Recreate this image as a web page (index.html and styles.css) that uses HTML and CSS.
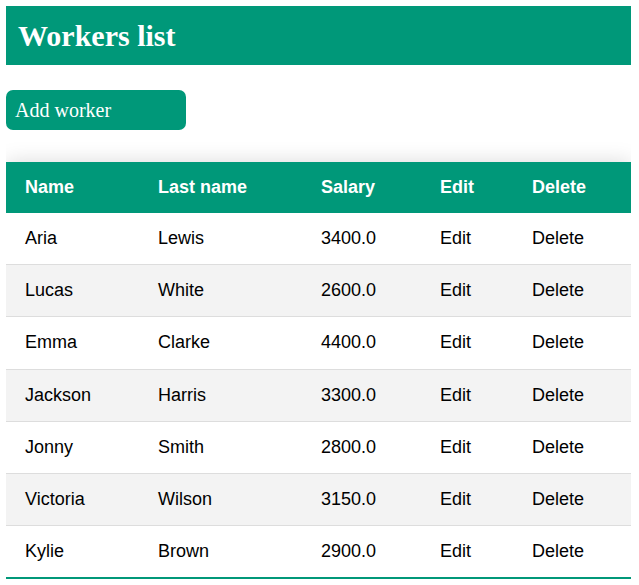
FILE: index.html
```html
<!DOCTYPE html>
<html>
<head>
<meta charset="utf-8">
<link rel="stylesheet" href="styles.css">
</head>
<body>
<header class="top">
  <h1 class="title">Workers list</h1>
</header>
<button class="add-btn">Add worker</button>
<table class="styled-table">
  <thead>
    <tr><th class="c1">Name</th><th class="c2">Last name</th><th class="c3">Salary</th><th class="c4">Edit</th><th class="c5">Delete</th></tr>
  </thead>
  <tbody>
    <tr><td>Aria</td><td>Lewis</td><td>3400.0</td><td>Edit</td><td>Delete</td></tr>
    <tr><td>Lucas</td><td>White</td><td>2600.0</td><td>Edit</td><td>Delete</td></tr>
    <tr><td>Emma</td><td>Clarke</td><td>4400.0</td><td>Edit</td><td>Delete</td></tr>
    <tr><td>Jackson</td><td>Harris</td><td>3300.0</td><td>Edit</td><td>Delete</td></tr>
    <tr><td>Jonny</td><td>Smith</td><td>2800.0</td><td>Edit</td><td>Delete</td></tr>
    <tr><td>Victoria</td><td>Wilson</td><td>3150.0</td><td>Edit</td><td>Delete</td></tr>
    <tr><td>Kylie</td><td>Brown</td><td>2900.0</td><td>Edit</td><td>Delete</td></tr>
  </tbody>
</table>
</body>
</html>
```
FILE: styles.css
```css
html, body {
  background: #ffffff;
}
body {
  margin: 6px 8px 0 6px;
  font-family: "Liberation Serif", "Times New Roman", serif;
}
.top {
  background: #009879;
  height: 59px;
  display: flex;
  align-items: center;
  padding: 0 12px;
}
.title {
  margin: 0;
  color: #ffffff;
  font-size: 30px;
  font-weight: bold;
  font-family: "Liberation Serif", "Times New Roman", serif;
  line-height: 34px;
}
.add-btn {
  display: block;
  margin-top: 25px;
  width: 180px;
  height: 40px;
  border: none;
  border-radius: 7px;
  background: #009879;
  color: #ffffff;
  font-family: "Liberation Serif", "Times New Roman", serif;
  font-size: 20px;
  text-align: left;
  padding: 0 9px;
}
.styled-table {
  margin-top: 32px;
  border-collapse: collapse;
  width: 625px;
  font-family: "Liberation Sans", Arial, sans-serif;
  font-size: 18px;
  box-shadow: 0 0 20px rgba(0, 0, 0, 0.15);
}
.styled-table th,
.styled-table td {
  box-sizing: border-box;
  padding: 15px 19px;
  line-height: 21px;
  white-space: nowrap;
}
.styled-table td {
  line-height: 21.17px;
  color: #000000;
}
.styled-table .c1 { width: 133px; }
.styled-table .c2 { width: 163px; }
.styled-table .c3 { width: 119px; }
.styled-table .c4 { width: 92px; }
.styled-table .c5 { width: 118px; }
.styled-table thead tr {
  background: #009879;
  color: #ffffff;
  text-align: left;
}
.styled-table th {
  font-weight: bold;
}
.styled-table tbody tr {
  border-bottom: 1px solid #dddddd;
}
.styled-table tbody tr:nth-of-type(even) {
  background: #f3f3f3;
}
.styled-table tbody tr:last-of-type {
  border-bottom: 2px solid #009879;
}
```
